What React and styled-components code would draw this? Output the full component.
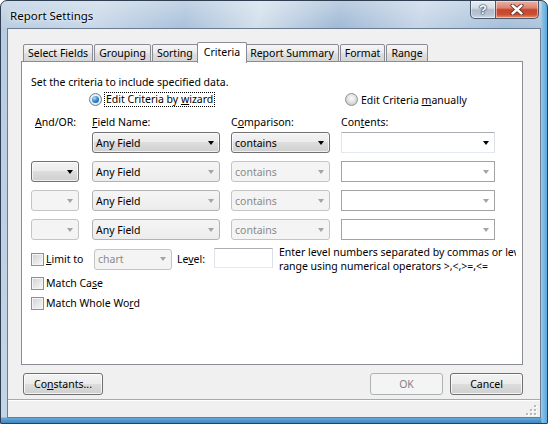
import React from 'react'
import styled, { createGlobalStyle, css } from 'styled-components'

const GlobalStyle = createGlobalStyle`
  html, body {
    margin: 0;
    padding: 0;
    background: #ffffff;
  }
  body {
    font-family: "Noto Sans", "DejaVu Sans", sans-serif;
    font-size: 10.5px;
    color: #000;
  }
`

const Frame = styled.div`
  box-sizing: border-box;
  width: 548px;
  height: 424px;
  display: flex;
  flex-direction: column;
  border: 1px solid #2f3e50;
  border-radius: 7px 7px 1px 1px;
  overflow: hidden;
  background:
    linear-gradient(to left, #5aa6dc 0, #8cc2e6 5px, transparent 6px),
    linear-gradient(to top, #3c86c2 0, #6aa9d6 5px, transparent 6px),
    linear-gradient(to bottom, rgba(255, 255, 255, 0.3) 0, rgba(255, 255, 255, 0) 28px),
    linear-gradient(
      100deg,
      #b7cce1 0%,
      #c7d7e8 16%,
      #a9c1da 30%,
      #d2dfeb 42%,
      #9fb9d5 55%,
      #c5d5e7 68%,
      #a4bed9 82%,
      #bccfe3 100%
    );
`

const TitleBar = styled.div`
  height: 27px;
  display: flex;
  align-items: flex-start;
`

const Title = styled.div`
  padding: 6px 0 0 9px;
  font-size: 11.5px;
  line-height: 17px;
  text-shadow: 0 0 6px rgba(255, 255, 255, 0.9), 0 0 2px rgba(255, 255, 255, 0.8);
`

const CaptionButtons = styled.div`
  margin-left: auto;
  margin-right: 8px;
  display: flex;
`

const CaptionButton = styled.div`
  box-sizing: border-box;
  height: 18px;
  display: flex;
  align-items: center;
  justify-content: center;
  border: 1px solid #4a586a;
  border-top: none;
  ${p =>
    p.$close
      ? css`
          width: 43px;
          border-radius: 0 0 5px 0;
          border-left: none;
          background: linear-gradient(
            #eab2a6 0%,
            #dc8571 40%,
            #c4452c 52%,
            #cc5034 80%,
            #e6916a 100%
          );
        `
      : css`
          width: 26px;
          border-radius: 0 0 0 5px;
          background: linear-gradient(
            #e9eef3 0%,
            #d2dbe5 42%,
            #aebccb 52%,
            #b7c4d2 80%,
            #d0dbe6 100%
          );
        `}
  box-shadow: inset 0 0 0 1px rgba(255, 255, 255, 0.45);
`

const HelpGlyph = styled.span`
  font-family: "Liberation Sans", Arial, sans-serif;
  font-weight: bold;
  font-size: 13px;
  color: #fff;
  text-shadow: 0 0 1px #2c3a4a, 0 0 1px #2c3a4a, 0 0 2px #2c3a4a;
`

const Client = styled.div`
  flex: 1;
  margin: 0 6px 5px 6px;
  border: 1px solid #6b7c90;
  background: #f0f0f0;
  display: flex;
  flex-direction: column;
`

const Body = styled.div`
  padding: 15px 17px 0 13px;
`

const TabStrip = styled.div`
  height: 18px;
  display: flex;
  align-items: flex-end;
  padding-left: 2px;
  position: relative;
  z-index: 1;
`

const Tab = styled.div`
  box-sizing: border-box;
  height: ${p => (p.$active ? 21 : 18)}px;
  margin: 0 ${p => (p.$active ? -2 : 1)}px ${p => (p.$active ? -1 : 0)}px
    ${p => (p.$active ? -2 : 0)}px;
  padding: 0 ${p => (p.$active ? 6 : 4)}px ${p => (p.$active ? 3 : 0)}px;
  display: flex;
  align-items: center;
  white-space: nowrap;
  border: 1px solid #898c95;
  border-bottom: ${p => (p.$active ? 'none' : '1px solid #898c95')};
  border-radius: 2px 2px 0 0;
  background: ${p =>
    p.$active ? '#ffffff' : 'linear-gradient(#f6f6f6, #e9e9e9 50%, #dedede 55%, #d6d6d6)'};
  position: relative;
  z-index: ${p => (p.$active ? 2 : 0)};
  &:last-child {
    margin-right: 0;
  }
`

const Panel = styled.div`
  box-sizing: border-box;
  height: 304px;
  margin-top: -1px;
  border: 1px solid #898c95;
  background: #ffffff;
  padding: 13px 0 0 9px;
`

const Intro = styled.div`
  line-height: 15px;
  height: 15px;
`

const RadioRow = styled.div`
  height: 17px;
  margin-top: 1px;
  display: grid;
  grid-template-columns: 256px auto;
  padding-left: 58px;
`

const Option = styled.div`
  display: flex;
  align-items: center;
  gap: 3px;
  white-space: nowrap;
`

const Radio = styled.span`
  box-sizing: border-box;
  width: 13px;
  height: 13px;
  border-radius: 50%;
  border: 1px solid ${p => (p.$checked ? '#6a7f96' : '#8e9196')};
  display: flex;
  align-items: center;
  justify-content: center;
  background: ${p =>
    p.$checked
      ? 'radial-gradient(circle at 50% 45%, #ffffff 0%, #e8ecf0 60%, #c9d0d8 100%)'
      : 'radial-gradient(circle at 50% 40%, #fbfbfb 0%, #e3e3e3 45%, #c4c4c4 85%)'};
  &::after {
    content: '';
    display: ${p => (p.$checked ? 'block' : 'none')};
    width: 7px;
    height: 7px;
    border-radius: 50%;
    background: radial-gradient(circle at 35% 30%, #b5def8 0%, #3c8ccb 45%, #0f4f8c 100%);
  }
`

const Focus = styled.span`
  outline: 1px dotted #000;
  outline-offset: 0;
  padding: 0 1px;
  line-height: 13px;
`

const ColumnGrid = styled.div`
  display: grid;
  grid-template-columns: 50px 128px 99px 154px;
  column-gap: 11px;
`

const Labels = styled(ColumnGrid)`
  margin-top: 7px;
  line-height: 15px;
`

const FieldLabel = styled.div`
  padding-left: ${p => p.$indent || 0}px;
  white-space: nowrap;
`

const Rows = styled(ColumnGrid)`
  margin-top: 2px;
  grid-auto-rows: 21px;
  row-gap: 8px;
  align-items: center;
`

const comboKinds = {
  button: css`
    border-color: #707070;
    border-radius: 3px;
    background: linear-gradient(#f3f3f3 0%, #ebebeb 50%, #dddddd 50%, #cfcfcf 100%);
    box-shadow: inset 0 0 0 1px rgba(255, 255, 255, 0.7);
    color: #000;
  `,
  plain: css`
    border-color: #b3b3b3;
    border-radius: 3px;
    background: linear-gradient(#f5f5f5, #ececec);
    color: #000;
  `,
  disabled: css`
    border-color: #c4c4c4;
    border-radius: 3px;
    background: #f4f4f4;
    color: #8a8a8a;
  `,
  edit: css`
    border-color: #abadb3 #dbdfe6 #e3e9ef #e2e3ea;
    background: #ffffff;
    color: #000;
  `,
  editDim: css`
    border-color: #a3a3a3;
    background: #ffffff;
    color: #8a8a8a;
  `
}

const Combo = styled.div`
  box-sizing: border-box;
  width: ${p => (p.$w ? `${p.$w}px` : '100%')};
  height: 21px;
  display: flex;
  align-items: center;
  padding-left: 3px;
  border: 1px solid;
  white-space: nowrap;
  ${p => comboKinds[p.$kind]}
`

const ComboText = styled.span`
  flex: 1;
  overflow: hidden;
`

const Arrow = styled.span`
  width: 0;
  height: 0;
  margin-right: 5px;
  border-left: 3.5px solid transparent;
  border-right: 3.5px solid transparent;
  border-top: 4px solid ${p => (p.$dim ? '#a4a4a4' : '#000')};
`

const LimitRow = styled.div`
  margin-top: 5px;
  height: 28px;
  display: flex;
  align-items: center;
`

const CheckItem = styled.label`
  display: flex;
  align-items: center;
  gap: 2px;
  width: ${p => (p.$w ? `${p.$w}px` : 'auto')};
  height: ${p => (p.$h ? `${p.$h}px` : 'auto')};
  white-space: nowrap;
`

const CheckBox = styled.span`
  box-sizing: border-box;
  width: 13px;
  height: 13px;
  border: 1px solid #8f8f8f;
  background: linear-gradient(135deg, #cfd2d6 0%, #e6e7e9 55%, #f8f8f8 100%);
  box-shadow: inset 0 0 0 1px #f4f4f4;
`

const LevelLabel = styled.span`
  margin-left: 5px;
  width: 37px;
`

const TextBox = styled.div`
  box-sizing: border-box;
  width: 59px;
  height: 20px;
  margin-top: -2px;
  border: 1px solid;
  border-color: #abadb3 #dbdfe6 #e3e9ef #e2e3ea;
  background: #fff;
`

const HelpText = styled.div`
  margin-left: 6px;
  width: 237px;
  overflow: hidden;
  white-space: nowrap;
  line-height: 14px;
`

const ButtonRow = styled.div`
  margin-top: 8px;
  display: flex;
  gap: 7px;
  padding-left: 2px;
`

const PushButton = styled.div`
  box-sizing: border-box;
  width: ${p => p.$w}px;
  height: 22px;
  display: flex;
  align-items: center;
  justify-content: center;
  border-radius: 3px;
  ${p =>
    p.$disabled
      ? css`
          border: 1px solid #adb2b5;
          background: #f4f4f4;
          color: #838383;
        `
      : css`
          border: 1px solid #707070;
          background: linear-gradient(#f3f3f3 0%, #ebebeb 50%, #dddddd 50%, #cfcfcf 100%);
          box-shadow: inset 0 0 0 1px rgba(255, 255, 255, 0.75);
        `}
  ${p => p.$push && 'margin-left: auto;'}
`

const StatusArea = styled.div`
  flex: 1;
  margin-top: 4px;
  border-top: 1px solid #a9a9a9;
  box-shadow: inset 0 1px 0 #ffffff;
  display: flex;
  justify-content: flex-end;
  align-items: flex-end;
  padding: 0 3px 1px 0;
`

const CloseGlyph = () => (
  <svg width="14" height="11" viewBox="0 0 14 11">
    <path d="M2.5 1.5 L11.5 9.5 M11.5 1.5 L2.5 9.5" stroke="#5a1f14" strokeWidth="4" strokeLinecap="round" />
    <path d="M2.5 1.5 L11.5 9.5 M11.5 1.5 L2.5 9.5" stroke="#ffffff" strokeWidth="2.4" strokeLinecap="round" />
  </svg>
)

const SizeGrip = () => {
  const dots = [
    [9, 1],
    [5, 5],
    [9, 5],
    [1, 9],
    [5, 9],
    [9, 9]
  ]
  return (
    <svg width="12" height="12" viewBox="0 0 12 12">
      {dots.map(([x, y]) => (
        <g key={`${x}-${y}`}>
          <rect x={x + 1} y={y + 1} width="2" height="2" fill="#ffffff" />
          <rect x={x} y={y} width="2" height="2" fill="#b6b9bd" />
        </g>
      ))}
    </svg>
  )
}

const tabs = ['Select Fields', 'Grouping', 'Sorting', 'Criteria', 'Report Summary', 'Format', 'Range']

const rows = [
  { andOr: 'button', field: 'button', comp: 'button', contents: 'edit' },
  { andOr: 'button', field: 'plain', comp: 'disabled', contents: 'editDim' },
  { andOr: 'disabled', field: 'plain', comp: 'disabled', contents: 'editDim' },
  { andOr: 'disabled', field: 'plain', comp: 'disabled', contents: 'editDim' }
]

const isDim = kind => kind !== 'button' && kind !== 'edit'

const ComboBox = ({ kind, text, w }) => (
  <Combo $kind={kind} $w={w}>
    <ComboText>{text}</ComboText>
    <Arrow $dim={isDim(kind)} />
  </Combo>
)

export default function App() {
  return (
    <>
      <GlobalStyle />
      <Frame>
        <TitleBar>
          <Title>Report Settings</Title>
          <CaptionButtons>
            <CaptionButton>
              <HelpGlyph>?</HelpGlyph>
            </CaptionButton>
            <CaptionButton $close>
              <CloseGlyph />
            </CaptionButton>
          </CaptionButtons>
        </TitleBar>
        <Client>
          <Body>
            <TabStrip>
              {tabs.map(t => (
                <Tab key={t} $active={t === 'Criteria'}>
                  {t}
                </Tab>
              ))}
            </TabStrip>
            <Panel>
              <Intro>Set the criteria to include specified data.</Intro>
              <RadioRow>
                <Option>
                  <Radio $checked />
                  <Focus>
                    Edit Criteria by <u>w</u>izard
                  </Focus>
                </Option>
                <Option>
                  <Radio />
                  <span>
                    Edit Criteria <u>m</u>anually
                  </span>
                </Option>
              </RadioRow>
              <Labels>
                <FieldLabel $indent={4}>
                  <u>A</u>nd/OR:
                </FieldLabel>
                <FieldLabel>
                  <u>F</u>ield Name:
                </FieldLabel>
                <FieldLabel>
                  C<u>o</u>mparison:
                </FieldLabel>
                <FieldLabel>
                  Con<u>t</u>ents:
                </FieldLabel>
              </Labels>
              <Rows>
                {rows.map((r, i) => (
                  <React.Fragment key={i}>
                    {i === 0 ? <span /> : <ComboBox kind={r.andOr} text="" w={48} />}
                    <ComboBox kind={r.field} text="Any Field" />
                    <ComboBox kind={r.comp} text="contains" />
                    <ComboBox kind={r.contents} text="" />
                  </React.Fragment>
                ))}
              </Rows>
              <LimitRow>
                <CheckItem $w={63}>
                  <CheckBox />
                  <span>
                    <u>L</u>imit to
                  </span>
                </CheckItem>
                <ComboBox kind="disabled" text="chart" w={78} />
                <LevelLabel>
                  Le<u>v</u>el:
                </LevelLabel>
                <TextBox />
                <HelpText>
                  Enter level numbers separated by commas or level
                  <br />
                  range using numerical operators &gt;,&lt;,&gt;=,&lt;=
                </HelpText>
              </LimitRow>
              <CheckItem $h={20}>
                <CheckBox />
                <span>
                  Match Ca<u>s</u>e
                </span>
              </CheckItem>
              <CheckItem $h={20}>
                <CheckBox />
                <span>
                  Match Whole Wo<u>r</u>d
                </span>
              </CheckItem>
            </Panel>
            <ButtonRow>
              <PushButton $w={80}>
                Co<u>n</u>stants...
              </PushButton>
              <PushButton $w={73} $disabled $push>
                OK
              </PushButton>
              <PushButton $w={73}>Cancel</PushButton>
            </ButtonRow>
          </Body>
          <StatusArea>
            <SizeGrip />
          </StatusArea>
        </Client>
      </Frame>
    </>
  )
}
